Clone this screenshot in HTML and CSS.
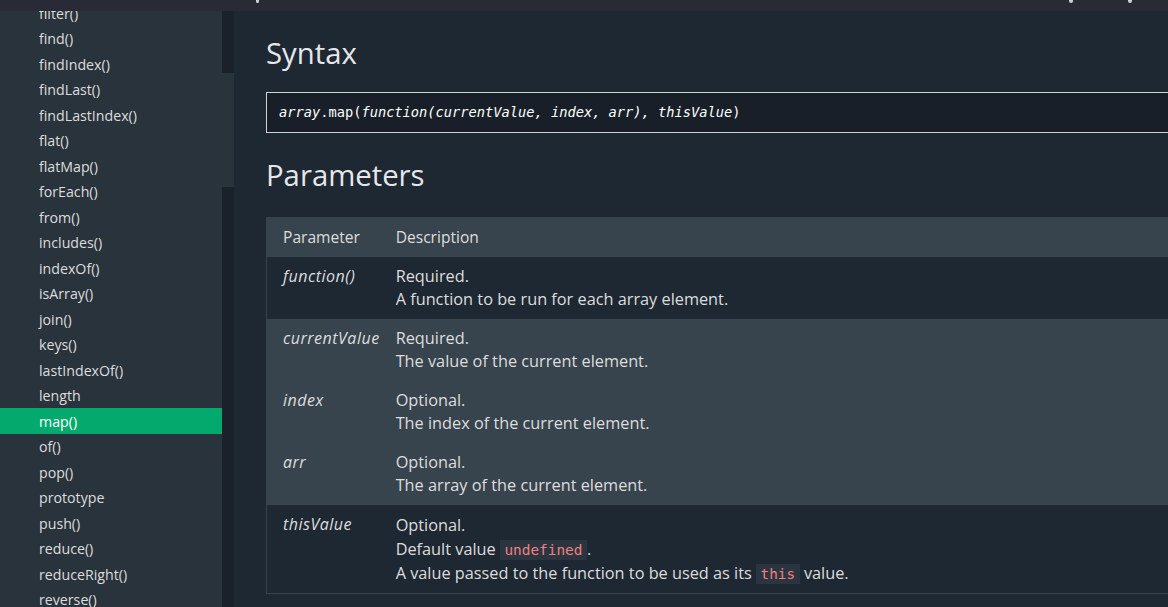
FILE: index.html
```html
<!DOCTYPE html>
<html lang="en">
<head>
<meta charset="utf-8">
<title>JavaScript Array map()</title>
<link rel="stylesheet" href="styles.css">
</head>
<body>
<div class="topbar">
  <span class="tb-mark tb-mark-a"></span>
  <span class="tb-mark tb-mark-b"></span>
  <span class="tb-mark tb-mark-c"></span>
</div>
<div class="layout">
  <nav class="sidebar">
    <ul class="menu">
      <li>filter()</li>
      <li>find()</li>
      <li>findIndex()</li>
      <li>findLast()</li>
      <li>findLastIndex()</li>
      <li>flat()</li>
      <li>flatMap()</li>
      <li>forEach()</li>
      <li>from()</li>
      <li>includes()</li>
      <li>indexOf()</li>
      <li>isArray()</li>
      <li>join()</li>
      <li>keys()</li>
      <li>lastIndexOf()</li>
      <li>length</li>
      <li class="active">map()</li>
      <li>of()</li>
      <li>pop()</li>
      <li>prototype</li>
      <li>push()</li>
      <li>reduce()</li>
      <li>reduceRight()</li>
      <li>reverse()</li>
    </ul>
  </nav>
  <div class="scrollbar"><div class="thumb"></div></div>
  <main class="main">
    <div class="content">
      <h2 class="heading">Syntax</h2>
      <div class="code-block"><i>array</i>.map(<i>function(currentValue, index, arr), thisValue</i>)</div>
      <h2 class="heading">Parameters</h2>
      <table class="params">
        <thead>
          <tr><th class="col1">Parameter</th><th>Description</th></tr>
        </thead>
        <tbody>
          <tr class="dark"><td class="col1"><i>function()</i></td><td>Required.<br>A function to be run for each array element.</td></tr>
          <tr class="light"><td class="col1"><i>currentValue</i></td><td>Required.<br>The value of the current element.</td></tr>
          <tr class="light"><td class="col1"><i>index</i></td><td>Optional.<br>The index of the current element.</td></tr>
          <tr class="light"><td class="col1"><i>arr</i></td><td>Optional.<br>The array of the current element.</td></tr>
          <tr class="dark"><td class="col1"><i>thisValue</i></td><td class="tall">Optional.<br>Default value <code class="codespan">undefined</code>.<br>A value passed to the function to be used as its <code class="codespan">this</code> value.</td></tr>
        </tbody>
      </table>
    </div>
  </main>
</div>
</body>
</html>
```
FILE: styles.css
```css
html, body {
  margin: 0;
  padding: 0;
  height: 100%;
  overflow: hidden;
  background: #1e2833;
}
body {
  font-family: "Open Sans", "Noto Sans", sans-serif;
  color: #dddddd;
  font-size: 15px;
}
.topbar {
  position: fixed;
  top: 0;
  left: 0;
  right: 0;
  height: 11px;
  background: #282a35;
  z-index: 5;
}
.tb-mark {
  position: absolute;
  bottom: 8px;
  width: 4px;
  height: 3px;
  border-radius: 0 0 2px 2px;
  background: #c8d0da;
}
.tb-mark-a { left: 256px; width: 3px; }
.tb-mark-b { left: 1069px; }
.tb-mark-c { left: 1128px; }
.layout {
  display: flex;
  height: 607px;
}
.sidebar {
  width: 222px;
  flex: none;
  background: #29333c;
  overflow: hidden;
}
.menu {
  list-style: none;
  margin: 0;
  padding: 0;
}
.menu li {
  padding: 2.5px 0 0.5px 39px;
  line-height: 22.5px;
  font-size: 14.2px;
  color: #dddddd;
  white-space: nowrap;
}
.menu li.active {
  background: #04aa6d;
  color: #ffffff;
}
.scrollbar {
  width: 12px;
  flex: none;
  background: #1a2129;
}
.thumb {
  margin-top: 73px;
  height: 114px;
  background: #29333c;
}
.main {
  flex: 1;
  min-width: 0;
  overflow: hidden;
  padding-left: 32px;
}
.content {
  width: 1000px;
  padding-top: 30px;
}
.heading {
  margin: 0;
  font-size: 29.3px;
  font-weight: 400;
  line-height: 46px;
  color: #e5e7ea;
}
.code-block {
  margin: 16px 0 19px;
  background: #181f28;
  border: 1px solid #d0d3d6;
  padding: 0 12px;
  height: 39px;
  line-height: 39px;
  font-family: "DejaVu Sans Mono", "Liberation Mono", monospace;
  font-size: 13.7px;
  color: #ffffff;
  white-space: nowrap;
}
.params {
  margin-top: 19px;
  width: 100%;
  border-collapse: collapse;
  border: 1px solid #38444d;
  font-size: 16.3px;
}
.params th {
  text-align: left;
  font-weight: 400;
  font-size: 15.6px;
  background: #38444d;
  padding: 8px 8px;
  line-height: 23px;
}
.params td {
  vertical-align: top;
  padding: 8px 8px;
  line-height: 23px;
}
.params .col1 {
  width: 1%;
  white-space: nowrap;
  padding-left: 16px;
}
.params td.col1 i {
  font-size: 16px;
  letter-spacing: 0.5px;
}
.params tr.light td { background: #38444d; }
.params tr.dark td { background: #1e2833; }
.params td.tall { line-height: 24px; }
.codespan {
  font-family: "DejaVu Sans Mono", "Liberation Mono", monospace;
  font-size: 14.4px;
  line-height: 1;
  color: #f27f7f;
  background: #2b353f;
  padding: 2px 4.5px;
}
```
